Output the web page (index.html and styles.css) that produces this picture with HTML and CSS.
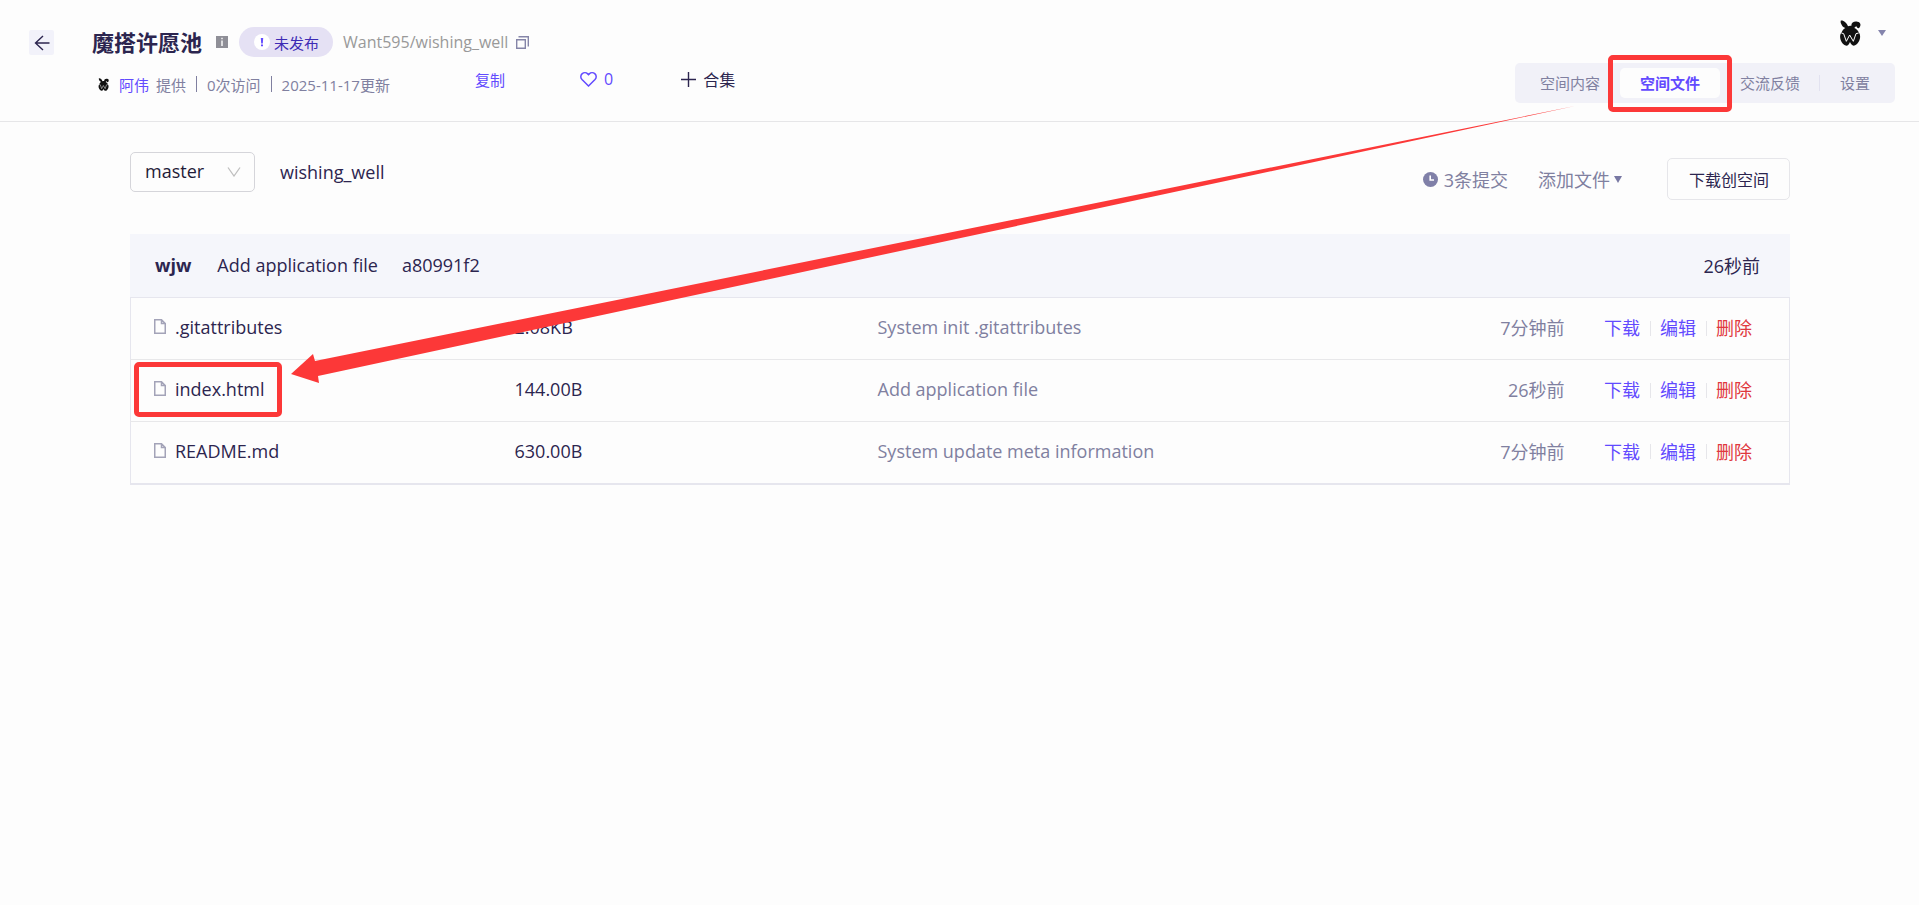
FILE: index.html
```html
<!DOCTYPE html>
<html lang="zh-CN">
<head>
    <meta charset="UTF-8">
    <meta name="viewport" content="width=device-width, initial-scale=1.0">
    <link rel="stylesheet" href="styles.css">
    <title>魔搭许愿池</title>
</head>
<body>
<svg class="defs" aria-hidden="true">
    <symbol id="rabbit" viewBox="0 0 64 78">
        <path fill="#111" d="M4 2C12 0 22 8 26 19C30 17 33 17 36 18C35 8 44 3 54 5C63 6 66 14 61 22C58 27 54 25 51 19C48 20 46 22 45 24C52 27 56 32 58 37C64 44 64 57 57 67C54 72 49 77 43 77C38 77 35 72 32 66C29 73 26 77 21 77C13 76 7 68 4 60C1 51 2 43 7 37C9 31 13 26 18 24C11 22 7 16 4 8Z"/>
        <path fill="none" stroke="#fdfdfd" stroke-width="3" d="M6 39L13 41L21 64L31 45L42 64L50 41L58 39"/>
    </symbol>
    <symbol id="file" viewBox="0 0 12 15">
        <path fill="none" stroke="#a3a3b8" stroke-width="1.5" d="M.75 .75H7.5L11.25 4.5V14.25H.75ZM7.5 .75V4.5H11.25"/>
    </symbol>
</svg>
<div class="header">
    <button type="button" class="back" aria-label="返回">
        <svg width="16" height="16" viewBox="0 0 16 16"><path fill="none" stroke="#2c254f" stroke-width="1.4" d="M15.5 8H1.5M9 1L1.5 8L9 15"/></svg>
    </button>
    <div class="info">
        <div class="title-row">
            <h1>魔搭许愿池</h1>
            <svg class="tip" width="12" height="12" viewBox="0 0 12 12"><path fill="#8f8f97" d="M0 0H12V12H0Z"/><path fill="#fff" d="M5.3 1.8H6.7V3.2H5.3ZM5.3 4.4H6.7V10H5.3Z"/></svg>
            <span class="status">
                <svg width="16" height="16" viewBox="0 0 16 16"><circle cx="8" cy="8" r="8" fill="#fff"/><path fill="#624aff" d="M6.8 4H9.2L8.8 9.4H7.2ZM7 10.4H9V12.2H7Z"/></svg>
                未发布
            </span>
            <span class="path">Want595/wishing_well</span>
            <svg class="copy" width="13" height="13" viewBox="0 0 13 13"><path fill="none" stroke="#8585a8" stroke-width="1.4" d="M.7 3.7H9.3V12.3H.7ZM2.5 .7H12.3V10.5"/></svg>
        </div>
        <div class="sub-row">
            <div class="meta">
                <svg width="11" height="13"><use href="#rabbit"/></svg>
                <a href="#" class="author">阿伟</a>
                <span>提供</span>
                <i></i>
                <span>0次访问</span>
                <i></i>
                <span>2025-11-17更新</span>
            </div>
            <div class="ops">
                <a href="#" class="copy-link">复制</a>
                <button type="button" class="like">
                    <svg width="17" height="15" viewBox="0 0 17 15"><path fill="none" stroke="#624aff" stroke-width="1.5" d="M8.5 14L2 7.6C.4 5.9 .4 3.4 2 1.9C3.7 .4 6.2 .4 7.7 1.9L8.5 2.7L9.3 1.9C10.8 .4 13.3 .4 15 1.9C16.6 3.4 16.6 5.9 15 7.6Z"/></svg>
                    0
                </button>
                <button type="button" class="collect">
                    <svg width="15" height="15" viewBox="0 0 15 15"><path stroke="#2c254f" stroke-width="1.4" d="M7.5 0V15M0 7.5H15"/></svg>
                    合集
                </button>
            </div>
        </div>
    </div>
    <div class="side">
        <button type="button" class="user" aria-label="用户">
            <svg width="22" height="26"><use href="#rabbit"/></svg>
            <svg width="8" height="6" viewBox="0 0 8 6"><path fill="#8585ad" d="M0 0H8L4 6Z"/></svg>
        </button>
        <nav class="tabs">
            <a href="#">空间内容</a>
            <a href="#" class="active">空间文件</a>
            <a href="#" class="split">交流反馈</a>
            <a href="#">设置</a>
        </nav>
    </div>
</div>

<div class="main">
    <div class="toolbar">
        <div class="branch">
            <select aria-label="分支">
                <option>master</option>
            </select>
            <svg width="14" height="10" viewBox="0 0 14 10"><path fill="none" stroke="#bfbfbf" stroke-width="1.3" d="M1 .5L7 9L13 .5"/></svg>
        </div>
        <span class="repo">wishing_well</span>
        <div class="tools">
            <a href="#" class="commits">
                <svg width="15" height="15" viewBox="0 0 15 15"><circle cx="7.5" cy="7.5" r="7.5" fill="#8080a8"/><path fill="none" stroke="#fff" stroke-width="1.6" d="M7.2 3.5V8H11"/></svg>
                3条提交
            </a>
            <button type="button" class="add">
                添加文件
                <svg width="8" height="7" viewBox="0 0 8 7"><path fill="#7878a3" d="M0 0H8L4 7Z"/></svg>
            </button>
            <button type="button" class="download">下载创空间</button>
        </div>
    </div>

    <div class="commit">
        <b>wjw</b>
        <span class="msg">Add application file</span>
        <span>a80991f2</span>
        <span class="ago">26秒前</span>
    </div>
    <table class="files">
        <tr>
            <td class="name"><a href="#"><svg width="12" height="15"><use href="#file"/></svg>.gitattributes</a></td>
            <td class="size">2.08KB</td>
            <td class="note">System init .gitattributes</td>
            <td class="time">7分钟前</td>
            <td class="action"><a href="#">下载</a><a href="#">编辑</a><a href="#" class="del">删除</a></td>
        </tr>
        <tr>
            <td class="name"><a href="#" class="marked"><svg width="12" height="15"><use href="#file"/></svg>index.html</a></td>
            <td class="size">144.00B</td>
            <td class="note">Add application file</td>
            <td class="time">26秒前</td>
            <td class="action"><a href="#">下载</a><a href="#">编辑</a><a href="#" class="del">删除</a></td>
        </tr>
        <tr>
            <td class="name"><a href="#"><svg width="12" height="15"><use href="#file"/></svg>README.md</a></td>
            <td class="size">630.00B</td>
            <td class="note">System update meta information</td>
            <td class="time">7分钟前</td>
            <td class="action"><a href="#">下载</a><a href="#">编辑</a><a href="#" class="del">删除</a></td>
        </tr>
    </table>
</div>

<!-- 标注箭头 -->
<svg class="arrow" viewBox="0 0 1284 277" preserveAspectRatio="none" aria-hidden="true">
    <path fill="#fc3838" d="M0 268L22 248L24 255L1284 0L27 270L28 277Z"/>
</svg>
</body>
</html>
```

FILE: styles.css
```css
body {
    margin: 0;
    position: relative;
    background-color: #fdfdfd;
    color: #2c254f;
    font-family: "Open Sans", "Noto Sans CJK SC", sans-serif;
    font-size: 18px;
}

a {
    color: #624aff;
    text-decoration: none;
}

button {
    padding: 0;
    border: none;
    background: none;
    color: inherit;
    font: inherit;
    cursor: pointer;
}

svg {
    flex: none;
}

.defs {
    position: absolute;
    width: 0;
    height: 0;
}

.header {
    display: flex;
    box-sizing: border-box;
    height: 122px;
    padding: 0 24px 0 29px;
    border-bottom: 1px solid #e6e6e8;
}

.back {
    display: flex;
    align-items: center;
    justify-content: center;
    width: 25px;
    height: 25px;
    margin-top: 30px;
    border-radius: 2px;
    background-color: #f2f2fa;
}

.info {
    margin-left: 38px;
    padding-top: 27px;
}

.title-row {
    display: flex;
    align-items: center;
    height: 30px;
}

h1 {
    margin: 0;
    font-size: 22px;
    line-height: 30px;
}

.tip {
    margin-left: 14px;
}

.status {
    display: flex;
    align-items: center;
    gap: 4px;
    box-sizing: border-box;
    height: 30px;
    margin-left: 11px;
    padding: 0 14px 0 15px;
    border-radius: 15px;
    background-color: #e5e1f4;
    color: #3d2bb5;
    font-size: 15px;
}

.path {
    margin-left: 10px;
    color: #999;
    font-size: 16px;
    line-height: 28px;
}

.copy {
    margin-left: 8px;
}

.sub-row {
    display: flex;
    align-items: flex-start;
    margin-top: 10px;
}

.meta {
    display: flex;
    align-items: center;
    width: 377px;
    height: 22px;
    margin: 6px 0 0 6px;
    color: #8080a0;
    font-size: 15px;
}

.meta .author {
    margin: 0 7px 0 10px;
}

.meta i {
    width: 1px;
    height: 16px;
    margin: 0 10px;
    background-color: #8080a0;
}

.ops {
    display: flex;
    align-items: center;
    height: 24px;
    font-size: 16px;
}

.copy-link {
    margin-right: 75px;
    font-size: 15px;
}

.like,
.collect {
    display: flex;
    align-items: center;
    gap: 7px;
}

.like {
    margin-right: 68px;
    color: #624aff;
}

.side {
    display: flex;
    flex-direction: column;
    align-items: flex-end;
    margin-left: auto;
    padding-top: 20px;
}

.user {
    display: flex;
    align-items: center;
    gap: 17px;
    height: 26px;
    margin: 0 9px 17px 0;
}

.tabs {
    display: flex;
    padding: 5px;
    border-radius: 5px;
    background-color: #f1f1f8;
}

.tabs a {
    position: relative;
    padding: 0 20px;
    border-radius: 5px;
    color: #8080a0;
    font-size: 15px;
    line-height: 30px;
}

.tabs .active {
    background-color: #fdfdfd;
    color: #624aff;
    font-weight: bold;
}

.tabs .split::after {
    content: "";
    position: absolute;
    top: 7px;
    right: 0;
    width: 1px;
    height: 16px;
    background-color: #e2e2f0;
}

.tabs .active::before,
.marked::before {
    content: "";
    position: absolute;
    z-index: 2;
    border: 5px solid #fc3838;
    border-radius: 5px;
    pointer-events: none;
}

.tabs .active::before {
    inset: -13px -12px -14px;
}

.main {
    padding: 30px 129px 0 130px;
}

.toolbar {
    display: flex;
    height: 82px;
}

.branch {
    position: relative;
    width: 125px;
    height: 40px;
}

.branch select {
    width: 100%;
    height: 100%;
    padding: 0 14px 2px;
    border: 1px solid #d5d5da;
    border-radius: 5px;
    background: none;
    color: #1f1b38;
    font: inherit;
    appearance: none;
}

.branch svg {
    position: absolute;
    top: 15px;
    right: 14px;
    pointer-events: none;
}

.repo {
    margin-left: 25px;
    line-height: 40px;
}

.tools {
    display: flex;
    align-items: center;
    height: 42px;
    margin: 6px 0 0 auto;
    color: #8080a0;
}

.commits {
    display: flex;
    align-items: center;
    gap: 6px;
    margin-right: 30px;
    color: #8080a0;
}

.add {
    display: flex;
    align-items: center;
    gap: 4px;
    margin-right: 45px;
}

.download {
    box-sizing: border-box;
    height: 42px;
    padding: 0 20px 0 21px;
    border: 1px solid #e6e6ea;
    border-radius: 5px;
    color: #2c254f;
    font-size: 16px;
}

.commit {
    display: flex;
    align-items: center;
    box-sizing: border-box;
    height: 63px;
    padding: 0 30px 2px 25px;
    background-color: #f5f6fb;
}

.commit .msg {
    margin: 0 24px 0 26px;
}

.commit .ago {
    margin-left: auto;
}

.files {
    width: 100%;
    table-layout: fixed;
    border: 1px solid #e6e6ee;
    border-bottom-width: 2px;
    border-collapse: collapse;
}

.files td {
    box-sizing: border-box;
    height: 62px;
    padding: 0 0 3px;
    border-bottom: 1px solid #e8e8ea;
}

.files .name {
    width: 384px;
    padding-left: 23px;
}

.name a {
    position: relative;
    display: inline-flex;
    align-items: center;
    gap: 9px;
    color: #2c254f;
}

.marked::before {
    inset: -15px -17px -16px -20px;
}

.files .size {
    width: 363px;
}

.files .note {
    color: #8080a0;
}

.files .time {
    width: 120px;
    color: #8080a0;
    text-align: right;
}

.files .action {
    width: 225px;
    padding-right: 37px;
    text-align: right;
}

.action a + a {
    margin-left: 10px;
    padding-left: 10px;
    background: linear-gradient(#e6e6ea, #e6e6ea) left center / 1px 15px no-repeat;
}

.action .del {
    color: #e0383e;
}

.arrow {
    position: absolute;
    z-index: 1;
    top: 106px;
    left: 291px;
    width: calc(100% - 635px);
    height: 277px;
    pointer-events: none;
}
```
